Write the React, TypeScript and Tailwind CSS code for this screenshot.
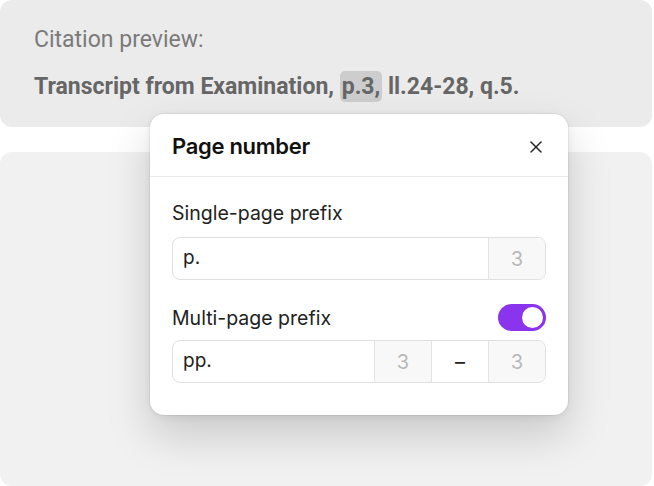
import { X } from 'lucide-react';

function PageCell({ children, muted = true }: { children: React.ReactNode; muted?: boolean }) {
  return (
    <div
      className={`flex w-[57px] items-center justify-center border-l border-[#e3e3e3] text-[20px] ${
        muted ? 'bg-[#f8f8f8] text-[#b8b8b8]' : 'bg-white text-[#222]'
      }`}
    >
      {children}
    </div>
  );
}

export default function App() {
  return (
    <div className="relative h-[486px] w-[654px] overflow-hidden bg-white">
      <div className="flex h-full flex-col pr-[2px]">
        <div className="h-[127px] rounded-xl bg-[#ebebeb] px-[34px] pt-[25px] font-['Roboto',sans-serif]">
          <p className="text-[23px] leading-[30px] text-[#7a7a7a]">Citation preview:</p>
          <p className="mt-[17px] text-[23px] font-bold leading-[30px] text-[#666]">
            Transcript from Examination,{' '}
            <span className="rounded-[5px] bg-[#cdcdcd] px-[2px] py-[2px]">p.3,</span>{' '}
            ll.24-28, q.5.
          </p>
        </div>
        <div className="mt-[25px] flex-1 rounded-xl bg-[#f1f1f1]" />
      </div>

      <div className="absolute left-[150px] top-[114px] w-[418px] rounded-[14px] bg-white font-['Inter',sans-serif] shadow-[0_20px_44px_rgba(0,0,0,0.17),0_2px_8px_rgba(0,0,0,0.06)] ring-1 ring-black/5">
        <div className="flex h-[63px] items-center justify-between border-b border-[#e8e8e8] px-[22px] pt-[3px]">
          <h2 className="text-[22px] font-semibold tracking-[-0.3px] text-[#111]">Page number</h2>
          <X className="h-[20px] w-[20px] text-[#222]" strokeWidth={1.8} />
        </div>
        <div className="px-[22px] pb-[32px] pt-[23px]">
          <label className="block text-[19.5px] leading-[26px] text-[#222]">Single-page prefix</label>
          <div className="mt-[11px] flex h-[43px] overflow-hidden rounded-[8px] border border-[#e0e0e0]">
            <div className="flex flex-1 items-center px-[10px] text-[19px] text-[#222]">p.</div>
            <PageCell>3</PageCell>
          </div>

          <div className="mt-[24px] flex items-center justify-between">
            <label className="text-[19.5px] leading-[26px] text-[#222]">Multi-page prefix</label>
            <div className="flex h-[27px] w-[48px] items-center justify-end rounded-full bg-[#8a34ee] p-[3px]">
              <div className="h-[21px] w-[21px] rounded-full bg-white" />
            </div>
          </div>
          <div className="mt-[9px] flex h-[43px] overflow-hidden rounded-[8px] border border-[#e0e0e0]">
            <div className="flex flex-1 items-center px-[10px] text-[19px] text-[#222]">pp.</div>
            <PageCell>3</PageCell>
            <PageCell muted={false}>–</PageCell>
            <PageCell>3</PageCell>
          </div>
        </div>
      </div>
    </div>
  );
}
